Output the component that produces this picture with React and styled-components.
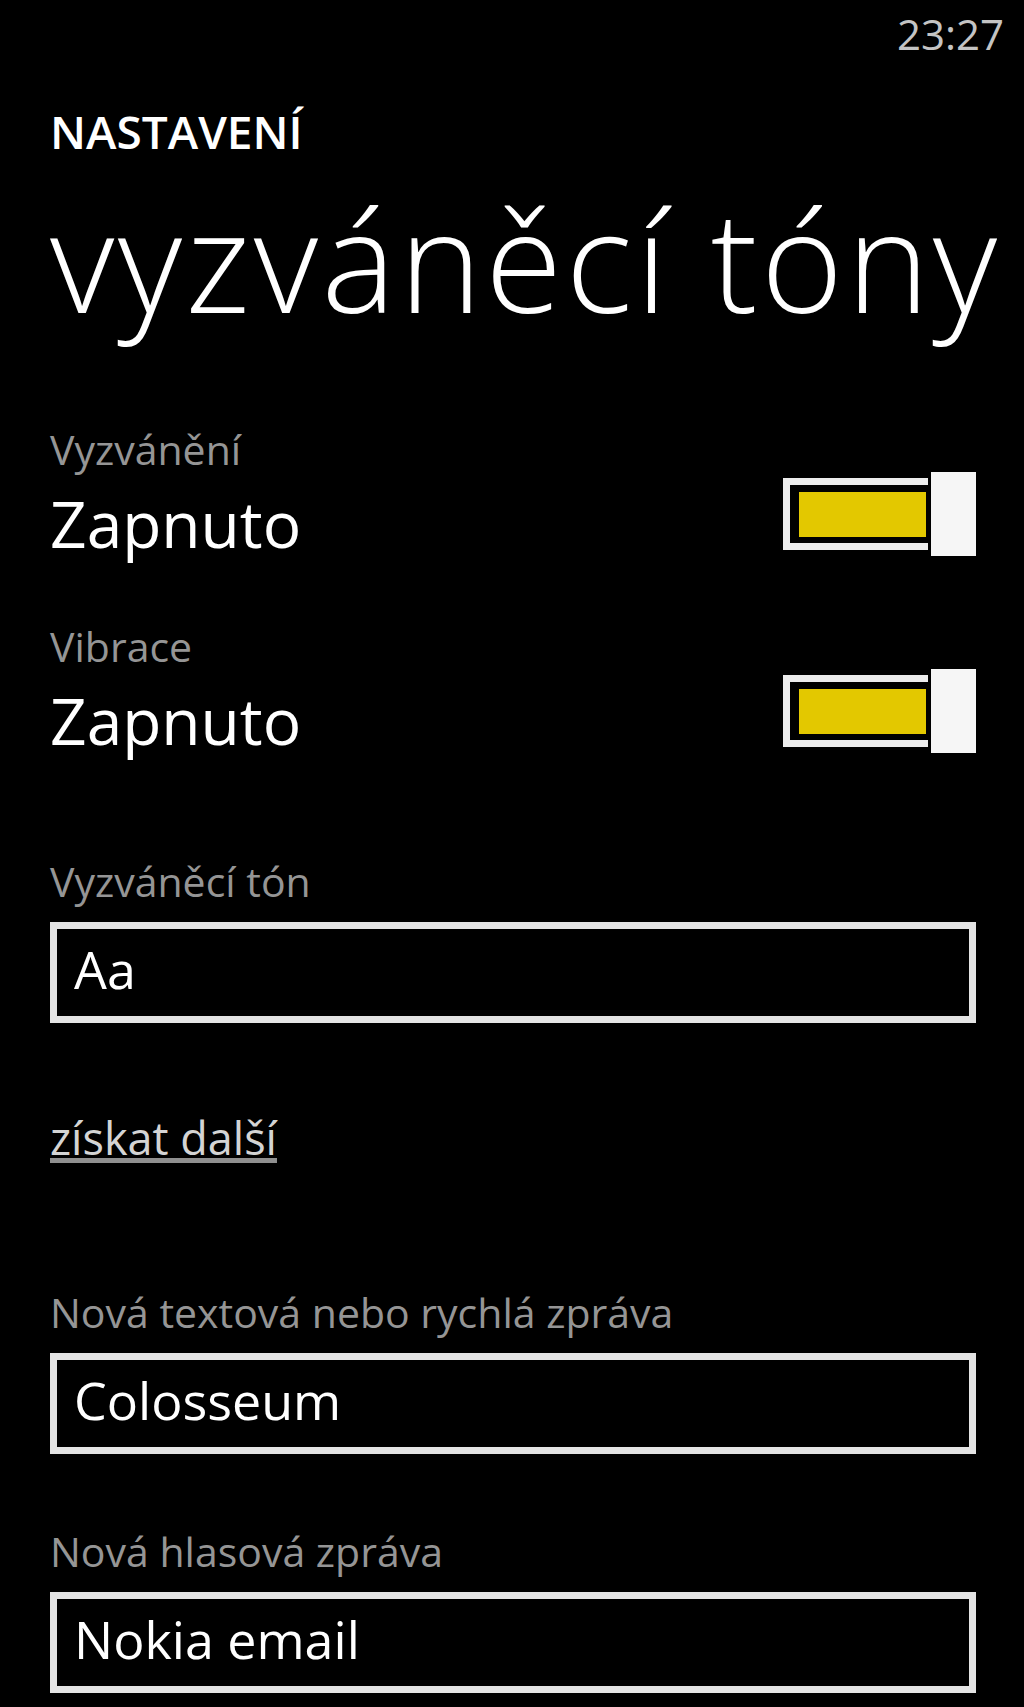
import styled, { createGlobalStyle } from "styled-components";

const GlobalStyle = createGlobalStyle`
  html, body {
    margin: 0;
    padding: 0;
    background: #000;
  }
  body {
    font-family: "Open Sans", "Noto Sans", sans-serif;
    color: #fff;
  }
`;

const Screen = styled.div`
  width: 1024px;
  min-height: 1707px;
  background: #000;
  box-sizing: border-box;
`;

const StatusBar = styled.div`
  display: flex;
  justify-content: flex-end;
  height: 50px;
  padding: 13px 20px 0 0;
  box-sizing: border-box;
`;

const Clock = styled.span`
  font-size: 42px;
  line-height: 1;
  color: #c4c4c4;
`;

const Content = styled.main`
  padding: 0 48px 0 50px;
`;

const AppName = styled.h2`
  margin: 58px 0 0;
  font-size: 46px;
  font-weight: 600;
  line-height: 1;
`;

const PageTitle = styled.h1`
  margin: 35px 0 0;
  font-size: 140px;
  font-weight: 300;
  line-height: 1;
  white-space: nowrap;
  letter-spacing: 3.5px;
`;

const ToggleRow = styled.div`
  display: flex;
  justify-content: space-between;
  align-items: flex-end;
  margin-top: ${(p) => p.$top}px;
`;

const FieldLabel = styled.div`
  font-size: 41px;
  line-height: 1;
  color: #959595;
`;

const ValueText = styled.div`
  margin-top: 22px;
  font-size: 64px;
  line-height: 1;
`;

const Toggle = styled.div`
  display: flex;
  align-items: center;
  gap: 3px;
`;

const Track = styled.div`
  width: 145px;
  height: 72px;
  box-sizing: border-box;
  border: 7px solid #ececec;
  border-right: none;
  padding: 7px 2px 6px 9px;
  background: #000;
  display: flex;
`;

const Fill = styled.div`
  flex: 1;
  background: ${(p) => (p.$on ? "#e3c800" : "#000")};
`;

const Thumb = styled.div`
  width: 45px;
  height: 84px;
  background: #f6f6f6;
`;

const Field = styled.div`
  margin-top: ${(p) => p.$top}px;
`;

const PickerBox = styled.div`
  margin-top: 20px;
  border: 7px solid #e4e4e4;
  padding: 14px 17px 21px;
  font-size: 52px;
  line-height: 1;
  color: #fff;
`;

const MoreLink = styled.a`
  display: inline-block;
  margin-top: 92px;
  font-size: 45px;
  line-height: 1;
  color: #d4d4d4;
  text-decoration: underline;
  text-decoration-color: #8f8f8f;
  text-decoration-thickness: 5px;
  text-underline-offset: 3px;
`;

const LinkWrap = styled.div``;

const toggles = [
  { label: "Vyzvánění", value: "Zapnuto", top: 100 },
  { label: "Vibrace", value: "Zapnuto", top: 70 },
];

const SwitchRow = ({ label, value, top }) => (
  <ToggleRow $top={top}>
    <div>
      <FieldLabel>{label}</FieldLabel>
      <ValueText>{value}</ValueText>
    </div>
    <Toggle>
      <Track>
        <Fill $on />
      </Track>
      <Thumb />
    </Toggle>
  </ToggleRow>
);

const Picker = ({ label, value, top }) => (
  <Field $top={top}>
    <FieldLabel>{label}</FieldLabel>
    <PickerBox>{value}</PickerBox>
  </Field>
);

export default function App() {
  return (
    <Screen>
      <GlobalStyle />
      <StatusBar>
        <Clock>23:27</Clock>
      </StatusBar>
      <Content>
        <AppName>NASTAVENÍ</AppName>
        <PageTitle>vyzváněcí tóny</PageTitle>
        {toggles.map((t) => (
          <SwitchRow key={t.label} {...t} />
        ))}
        <Picker label="Vyzváněcí tón" value="Aa" top={108} />
        <LinkWrap>
          <MoreLink href="#">získat další</MoreLink>
        </LinkWrap>
        <Picker label="Nová textová nebo rychlá zpráva" value="Colosseum" top={132} />
        <Picker label="Nová hlasová zpráva" value="Nokia email" top={77} />
      </Content>
    </Screen>
  );
}
